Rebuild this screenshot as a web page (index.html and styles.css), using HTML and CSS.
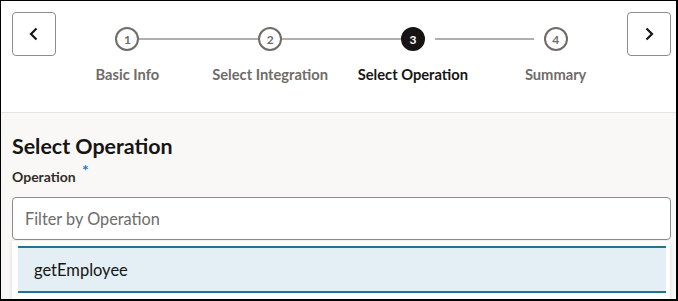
FILE: index.html
```html
<!DOCTYPE html>
<html lang="en">
  <head>
    <meta charset="utf-8" />
    <title>Select Operation</title>
    <link rel="stylesheet" href="styles.css">
  </head>
  <body>
    <div class="wizard">
      <header class="wizard-head">
        <button class="nav-btn" aria-label="Previous">
          <svg width="12" height="14" viewBox="0 0 12 14"><path d="M8.5 1.5 L3 7 L8.5 12.5" fill="none" stroke="#161513" stroke-width="2.2"/></svg>
        </button>

        <ol class="train">
          <li class="step done first">
            <div class="dot-row"><span class="line"></span><span class="dot">1</span><span class="line"></span></div>
            <span class="label">Basic Info</span>
          </li>
          <li class="step done">
            <div class="dot-row"><span class="line"></span><span class="dot">2</span><span class="line"></span></div>
            <span class="label">Select Integration</span>
          </li>
          <li class="step current">
            <div class="dot-row"><span class="line"></span><span class="dot">3</span><span class="line gap-left"></span></div>
            <span class="label">Select Operation</span>
          </li>
          <li class="step last">
            <div class="dot-row"><span class="line gap-right"></span><span class="dot">4</span><span class="line"></span></div>
            <span class="label">Summary</span>
          </li>
        </ol>

        <button class="nav-btn" aria-label="Next">
          <svg width="12" height="14" viewBox="0 0 12 14"><path d="M3.5 1.5 L9 7 L3.5 12.5" fill="none" stroke="#161513" stroke-width="2.2"/></svg>
        </button>
      </header>

      <main class="wizard-body">
        <h2>Select Operation</h2>
        <label class="field-label">Operation <span class="req">*</span></label>
        <input class="filter" type="text" placeholder="Filter by Operation">
        <ul class="options">
          <li class="selected">getEmployee</li>
        </ul>
      </main>
    </div>
  </body>
</html>
```

FILE: styles.css
```css
body {
  margin: 0;
  font-family: 'Lato', 'Liberation Sans', sans-serif;
  color: #161513;
}

.wizard {
  width: 678px;
  height: 301px;
  box-sizing: border-box;
  border: 1px solid #000;
  border-right-width: 2px;
  border-bottom-width: 2px;
  overflow: hidden;
  display: flex;
  flex-direction: column;
}

/* header with the train */
.wizard-head {
  flex: none;
  display: flex;
  align-items: flex-start;
  padding: 11px 5px 0 11px;
  height: 112px;
  box-sizing: border-box;
  background: #fff;
  border-bottom: 1px solid #e4e3e1;
}
.nav-btn {
  width: 44px;
  height: 44px;
  flex: none;
  border: 1px solid #8c8c8c;
  border-radius: 4px;
  background: #fff;
  display: flex;
  align-items: center;
  justify-content: center;
  padding: 0;
}

.train {
  flex: 1;
  display: flex;
  list-style: none;
  margin: 0;
  padding: 0;
}
.step {
  flex: 1;
  display: flex;
  flex-direction: column;
  align-items: center;
  padding-top: 15px;
}
.dot-row {
  display: flex;
  align-items: center;
  width: 100%;
}
.dot-row .line {
  flex: 1;
  height: 2px;
  background: #b0afad;
}
.first .dot-row .line:first-child,
.last .dot-row .line:last-child {
  visibility: hidden;
}
.dot-row .line.gap-left {
  background: linear-gradient(to right, transparent 10px, #b0afad 10px);
}
.dot-row .line.gap-right {
  background: linear-gradient(to left, transparent 10px, #b0afad 10px);
}
.dot {
  width: 24px;
  height: 24px;
  box-sizing: border-box;
  border: 2px solid #6f6c69;
  border-radius: 50%;
  display: flex;
  align-items: center;
  justify-content: center;
  font-size: 12px;
  font-weight: 700;
  color: #6f6c69;
  background: #fff;
}
.current .dot {
  background: #161513;
  border-color: #161513;
  color: #fff;
}
.label {
  margin-top: 14px;
  font-size: 14.7px;
  font-weight: 700;
  color: #6f6c69;
  white-space: nowrap;
}
.current .label {
  color: #161513;
}

/* body */
.wizard-body {
  flex: 1;
  background: #f9f8f6;
  padding: 0 5px 0 11px;
}
.wizard-body h2 {
  margin: 20px 0 0;
  font-size: 21.4px;
  font-weight: 700;
  line-height: 26px;
}
.field-label {
  display: block;
  margin-top: 8px;
  font-size: 14px;
  font-weight: 700;
  line-height: 18px;
  color: #312d2a;
}
.field-label .req {
  color: #227cb5;
  font-size: 16px;
  position: relative;
  top: -6px;
  margin-left: 3px;
}
.filter {
  display: block;
  margin-top: 11px;
  width: 100%;
  height: 43px;
  box-sizing: border-box;
  border: 1px solid #8c8c8c;
  border-radius: 4px;
  padding: 0 12px;
  font-family: inherit;
  font-size: 16.3px;
  background: #fff;
}
.filter::placeholder {
  color: #6f6c69;
}
.options {
  list-style: none;
  margin: 1px 1px 0 0;
  padding: 5px 4px 0 6px;
  background: #fff;
  height: 60px;
  box-shadow: 0 1px 4px #00000022;
}
.options li {
  height: 43px;
  border-top: 2px solid #227493;
  border-bottom: 2px solid #227493;
  padding: 0 16px;
  display: flex;
  align-items: center;
  font-size: 16.5px;
}
.options li.selected {
  background: #e4eff5;
}
```
